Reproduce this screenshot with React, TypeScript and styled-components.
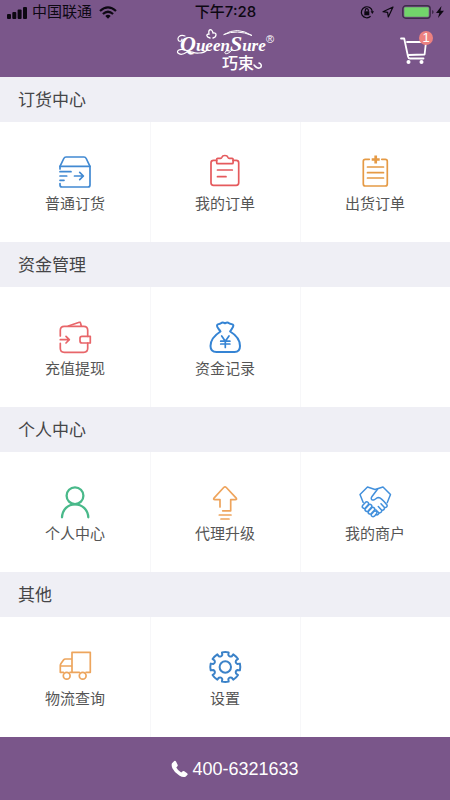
import React from "react";
import styled, { createGlobalStyle } from "styled-components";

const purple = "#7a568a";
const cjk = '"Liberation Sans", "Noto Sans CJK SC", sans-serif';

const GlobalStyle = createGlobalStyle`
  * { box-sizing: border-box; }
  body { margin: 0; background: #fff; font-family: ${cjk}; }
`;

const Page = styled.div`
  min-height: 100vh;
  display: flex;
  flex-direction: column;
`;

const Header = styled.header`
  background: ${purple};
`;

const StatusBar = styled.div`
  display: grid;
  grid-template-columns: 1fr auto 1fr;
  align-items: center;
  height: 24px;
  padding: 0 6px 0 7px;
  color: #0d0812;
  font-size: 15px;
  line-height: 24px;
`;

const StatusGroup = styled.div<{ $end?: boolean }>`
  display: flex;
  align-items: center;
  gap: ${(p) => (p.$end ? 8 : 5)}px;
  justify-content: ${(p) => (p.$end ? "flex-end" : "flex-start")};
`;

const Carrier = styled.span`
  margin-right: 2px;
`;

const Time = styled.time`
  font-family: Inter, "Noto Sans CJK SC", sans-serif;
  font-weight: 500;
`;

const Power = styled.div`
  display: flex;
  align-items: center;
  gap: 2px;
`;

const NavBar = styled.div`
  display: grid;
  grid-template-columns: 1fr auto 1fr;
  align-items: center;
  height: 53px;
  padding: 0 16px;
`;

const Logo = styled.svg`
  grid-column: 2;
  display: block;
  overflow: visible;
`;

const CartButton = styled.button`
  position: relative;
  justify-self: end;
  display: flex;
  padding: 0;
  border: 0;
  background: none;
  color: #fff;
  cursor: pointer;
`;

const Badge = styled.span`
  position: absolute;
  top: -6px;
  right: 1px;
  width: 14px;
  height: 14px;
  border-radius: 50%;
  background: #ec8180;
  color: #fff;
  font-size: 13px;
  line-height: 14px;
  text-align: center;
`;

const SectionTitle = styled.h2`
  margin: 0;
  padding: 2px 18px 0;
  background: #efeff5;
  color: #454547;
  font-size: 17px;
  font-weight: 400;
  line-height: 43px;
`;

const Grid = styled.div`
  display: grid;
  grid-template-columns: repeat(3, 1fr);
`;

const Tile = styled.a`
  display: flex;
  flex-direction: column;
  align-items: center;
  gap: 4px;
  height: 120px;
  padding-top: 31px;
  color: #555;
  font-size: 15px;
  line-height: 22px;
  text-decoration: none;

  &:not(:nth-child(3n + 1)) {
    box-shadow: inset 1px 0 #f7f7f9;
  }
`;

const EmptyTile = styled(Tile).attrs({ as: "div" })``;

const TileIcon = styled.svg<{ $color: string }>`
  width: 36px;
  height: 36px;
  overflow: visible;
  fill: none;
  stroke: ${(p) => p.$color};
  stroke-width: 1.7;
  stroke-linecap: round;
  stroke-linejoin: round;
`;

const Footer = styled.footer`
  flex: 1 0 63px;
  display: flex;
  align-items: center;
  justify-content: center;
  background: ${purple};
`;

const PhoneLink = styled.a`
  display: flex;
  align-items: center;
  gap: 4px;
  padding-left: 20px;
  color: #fff;
  font-size: 18px;
  line-height: 24px;
  text-decoration: none;
`;

function gearPath(cx: number, cy: number, outer: number, inner: number) {
  const point = (r: number, deg: number) => {
    const a = (deg * Math.PI) / 180;
    return `${(cx + r * Math.cos(a)).toFixed(2)} ${(cy + r * Math.sin(a)).toFixed(2)}`;
  };
  let d = "";
  for (let i = 0; i < 8; i++) {
    const a = i * 45;
    d += `${i ? "L" : "M"}${point(inner, a - 14)}L${point(outer, a - 13)}`;
    d += `A${outer} ${outer} 0 0 1 ${point(outer, a + 13)}`;
    d += `L${point(inner, a + 14)}Q${point(inner - 2, a + 22.5)} ${point(inner, a + 31)}`;
  }
  return d + "Z";
}

const icons = {
  box: (
    <>
      <path d="M3 16V13.300L6.800 5.500Q7.500 4 9 4H27Q28.500 4 29.200 5.500L33 13.300V32Q33 34 31 34H5Q3 34 3 32V30.500" />
      <path d="M3 13.300H33M3 18.700H14M3 23H9.700M3 27.300H7M17.500 23H26.300M22.700 19.300L26.400 23L22.700 26.700" />
    </>
  ),
  clipboard: (
    <>
      <path d="M9.700 7.300H6.500Q4 7.300 4 9.800v20q0 2.500 2.500 2.500h22.700q2.500 0 2.500-2.500v-20q0-2.500-2.500-2.500H26" />
      <path d="M10.700 5.300h2.800q1 0 1.400-1 .6-1.800 3-1.800t3 1.800q.4 1 1.400 1h2.800q1 0 1 1v3.400q0 1-1 1H10.700q-1 0-1-1V6.300q0-1 1-1zM10.500 17h14.800M10.500 23.700H19" />
    </>
  ),
  shipped: (
    <>
      <path d="M12.300 6.300H8.300q-2 0-2 2V31q0 2 2 2h20q2 0 2-2V8.300q0-2-2-2h-3.500M10.500 14h16M10.500 19.700h16M10.500 25h16" />
      <path d="M18.700 2.500v8M14.700 6.500h8" strokeWidth="2.700" strokeLinecap="butt" />
    </>
  ),
  wallet: (
    <>
      <path d="M3.300 18v-5.700q0-4 4-4h19.400q4 0 4 4v6M30.700 25v5.300q0 4-4 4H7.300q-4 0-4-4v-5" />
      <path d="M3.300 21.700h9M9 18.400l3.300 3.300L9 25M33.300 18.300H25q-2 0-2 2V23q0 2 2 2h8.300zM11.300 8l11-3.700q1-.3 1.200.7L24.300 8" />
    </>
  ),
  bag: (
    <>
      <path strokeWidth="2" d="M13.500 13.500C12 11 9.500 9.500 10 7.200 10.400 5.200 13 6.500 14 5.200q1.500-1.300 4 .1 2.500-1.400 4-.1c1 1.300 4 0 4.400 2 .3 2.300-2 3.800-3.300 6.300C29 17 33 22 33 28c0 4-2 6-5.500 6h-18c-4 0-6-2-6-6C3.500 22 8 17 13.500 13.500z" />
      <path d="M14.700 18l3.600 5.200L22 18M18.300 23.200v6.300M13.700 23.200h9.200M13.700 26h9.200" />
    </>
  ),
  person: (
    <>
      <circle cx="18" cy="12.700" r="8.400" strokeWidth="2.300" />
      <path d="M5 34.300C5.400 26.500 11 21.300 18 21.300s12.900 5.200 13.300 13" strokeWidth="2.300" />
    </>
  ),
  upgrade: (
    <path d="M13 24V16.600H8q-2.200 0-.8-1.800L16.700 4.500q1.300-1.300 2.600 0l9.700 10.300q1.400 1.800-.8 1.800h-4.500v11.200h-8M12.300 32h11.700M14 36h8" />
  ),
  handshake: (
    <>
      <path strokeWidth="1.500" d="M18 6.500L10.500 4 3 11.500l3.200 8M18 6.500L26 4l7.500 7.500-3.300 8.200" />
      <path strokeWidth="1.500" d="M20.500 6.300L15 13.500c-1.500 2-.5 4 1.500 3.500 2-.4 3-2.500 5-2.500 2.500.3 6.300 4.700 8.300 7.200 1 1.800-.8 3.600-2.600 2.500.8 2-.9 3.600-2.700 2.800.7 1.900-1 3.400-2.700 2.700.2 1.800-1.500 2.700-3 1.800M27.200 24.200l-3.200-3.400M24.500 27l-3.200-3.400M21.800 29.700l-3-3" />
      <path strokeWidth="1.500" d="M5.800 22.300l2.600-2.900c1.700-1.500 4 .4 2.800 2.300L8.300 25c-1.800 1.300-4-.8-2.500-2.700zM8.500 25.500l3.200-3.600c1.700-1.400 4 .4 2.700 2.300l-3.300 3.800c-1.800 1.300-4-.7-2.600-2.500zM11.600 28.200l3-3.300c1.700-1.400 4 .4 2.700 2.300l-3 3.400c-1.800 1.300-4-.6-2.700-2.400zM14.600 30.900l2.300-2.500c1.600-1.300 3.900.4 2.700 2.300l-2.200 2.500c-1.800 1.300-4-.5-2.800-2.300z" />
    </>
  ),
  truck: (
    <>
      <path d="M15 24.300v-20h18.300v20H29M6.400 24.300H3.300V17.500q0-1 .7-2l2.500-3.500q.7-1 2-1H15M3.300 18H15M13 24.300h9.300" />
      <circle cx="9.700" cy="27.700" r="3.400" />
      <circle cx="25.700" cy="27.700" r="3.400" />
    </>
  ),
  gear: (
    <>
      <path d={gearPath(18.300, 19, 15, 12.500)} strokeWidth="2" />
      <circle cx="18.300" cy="19" r="5.700" strokeWidth="2" />
    </>
  ),
};

type Item = { label: string; icon: keyof typeof icons; color: string };

const sections: { title: string; items: Item[] }[] = [
  {
    title: "订货中心",
    items: [
      { label: "普通订货", icon: "box", color: "#4189d2" },
      { label: "我的订单", icon: "clipboard", color: "#e55a5d" },
      { label: "出货订单", icon: "shipped", color: "#e59a45" },
    ],
  },
  {
    title: "资金管理",
    items: [
      { label: "充值提现", icon: "wallet", color: "#e8666a" },
      { label: "资金记录", icon: "bag", color: "#3584d4" },
    ],
  },
  {
    title: "个人中心",
    items: [
      { label: "个人中心", icon: "person", color: "#49b98a" },
      { label: "代理升级", icon: "upgrade", color: "#eea45c" },
      { label: "我的商户", icon: "handshake", color: "#4290dc" },
    ],
  },
  {
    title: "其他",
    items: [
      { label: "物流查询", icon: "truck", color: "#eda55d" },
      { label: "设置", icon: "gear", color: "#3b82c8" },
    ],
  },
];

function SignalIcon() {
  return (
    <svg width="20" height="13" viewBox="0 0 20 13" fill="currentColor" aria-hidden="true">
      <rect x="0" y="8" width="4" height="5" rx="1" />
      <rect x="5.300" y="6" width="4" height="7" rx="1" />
      <rect x="10.600" y="3.500" width="4" height="9.500" rx="1" />
      <rect x="16" y="1" width="4" height="12" rx="1" />
    </svg>
  );
}

function WifiIcon() {
  return (
    <svg width="18" height="13" viewBox="0 0 18 13" fill="none" stroke="currentColor" strokeWidth="2.200" aria-hidden="true">
      <path d="M1 5Q9-2.200 17 5M3.900 8Q9 3.500 14.100 8" />
      <path d="M6.300 9.900Q9 7.700 11.700 9.900L9 12.700z" fill="currentColor" stroke="none" />
    </svg>
  );
}

function RotationLockIcon() {
  return (
    <svg width="14" height="14" viewBox="0 0 14 14" fill="none" stroke="currentColor" strokeWidth="1.200" aria-hidden="true">
      <path d="M10.600 11.300A5.500 5.500 0 1 1 12.300 6.500" />
      <path d="M10.600 6.300h3.400l-1.700 2.600z" fill="currentColor" stroke="none" />
      <path d="M4.300 6.300h5v4h-5z" fill="currentColor" stroke="none" />
      <path d="M5.300 6.500V5.200a1.500 1.500 0 0 1 3 0v1.300" />
    </svg>
  );
}

function LocationIcon() {
  return (
    <svg width="12" height="12" viewBox="0 0 12 12" fill="none" stroke="currentColor" strokeWidth="1.200" strokeLinejoin="round" aria-hidden="true">
      <path d="M11 1L1 5.700l4.600.7.7 4.600z" />
    </svg>
  );
}

function BatteryIcon() {
  return (
    <svg width="32" height="14" viewBox="0 0 32 14" aria-hidden="true">
      <rect x="0.800" y="0.800" width="27.400" height="12.400" rx="3" fill="none" stroke="#3f2b4b" strokeWidth="1.400" />
      <rect x="2.300" y="2.300" width="24.400" height="9.400" rx="1" fill="#72d46b" />
      <path d="M30 5v4q1.700-.6 1.700-2T30 5z" fill="#3f2b4b" />
    </svg>
  );
}

function BoltIcon() {
  return (
    <svg width="8" height="12" viewBox="0 0 8 12" fill="currentColor" aria-hidden="true">
      <path d="M5.500 0L0 7h3.300L2 12l6-7.200H4.500z" />
    </svg>
  );
}

function BrandLogo() {
  return (
    <Logo width="98" height="45" viewBox="0 0 98 45" role="img" aria-label="Queen Sure 巧束">
      <text x="4" y="23" fill="#fff" fontSize="17" fontFamily='"Liberation Serif", serif' fontStyle="italic" fontWeight="700">
        <tspan fontSize="22">Q</tspan>ueen<tspan fontSize="22">S</tspan>ure
      </text>
      <g fill="none" stroke="#fff" strokeLinecap="round">
        <path d="M9 8C4 6 0 10 3 13q3 1 3-2M9 22C4 20 0 23 2 25s6 1 9-1c4-2 6 2 12 1 4 0 6-1 8-3" strokeWidth="1.200" />
        <path d="M48 6.500Q61-2 76 7.500Q61 1 48 6.500M56 22c-3 4-8 5-7 2q1-2 5-1" strokeWidth="1" />
        <path d="M34 10c-4-1-4-4-1-4-1-5 3-6 4-1 4-1 4 4 0 5" strokeWidth="1.300" />
        <path d="M78 37q4 5 7 2 1-3-2-4" strokeWidth="1.500" />
      </g>
      <text x="90" y="15" fill="#fff" fontSize="11" fontFamily='"Liberation Sans", sans-serif'>®</text>
      <text x="46" y="41" fill="#fff" fontSize="16" fontWeight="500" fontFamily='"Noto Sans CJK SC", sans-serif'>巧束</text>
    </Logo>
  );
}

function CartIcon() {
  return (
    <svg width="34" height="28" viewBox="0 0 34 28" fill="none" stroke="currentColor" strokeWidth="1.800" strokeLinecap="round" strokeLinejoin="round" aria-hidden="true">
      <path d="M1 1.500h3.200L8 19.500Q8.400 21.500 10 21.500H23.500M7 5H26L24.600 17.500 9 18" />
      <circle cx="8.500" cy="25" r="2" fill="currentColor" stroke="none" />
      <circle cx="21.500" cy="25" r="2" fill="currentColor" stroke="none" />
    </svg>
  );
}

export default function App() {
  return (
    <Page>
      <GlobalStyle />
      <Header>
        <StatusBar>
          <StatusGroup>
            <SignalIcon />
            <Carrier>中国联通</Carrier>
            <WifiIcon />
          </StatusGroup>
          <Time>下午7:28</Time>
          <StatusGroup $end>
            <RotationLockIcon />
            <LocationIcon />
            <Power>
              <BatteryIcon />
              <BoltIcon />
            </Power>
          </StatusGroup>
        </StatusBar>
        <NavBar>
          <BrandLogo />
          <CartButton type="button" aria-label="购物车">
            <CartIcon />
            <Badge>1</Badge>
          </CartButton>
        </NavBar>
      </Header>
      <main>
        {sections.map((section) => (
          <section key={section.title}>
            <SectionTitle>{section.title}</SectionTitle>
            <Grid>
              {section.items.map((item) => (
                <Tile key={item.label} href="#">
                  <TileIcon viewBox="0 0 36 36" $color={item.color} aria-hidden="true">
                    {icons[item.icon]}
                  </TileIcon>
                  {item.label}
                </Tile>
              ))}
              {section.items.length < 3 && <EmptyTile />}
            </Grid>
          </section>
        ))}
      </main>
      <Footer>
        <PhoneLink href="tel:400-6321633">
          <svg width="17" height="18" viewBox="0 0 17 18" fill="currentColor" aria-hidden="true">
            <path d="M1 3.300L3.300 1q1-.6 1.700.5L6.600 4.700q.5 1-.4 1.700L5.300 7.500q1.500 3 4.900 5l1.500-1.200q.8-.6 1.600 0l2.800 2q1 .8.2 1.700l-1.800 1.700Q12 17.800 8.300 15.500 3.500 12.800 1.400 8.300.1 5.300 1 3.300z" />
          </svg>
          400-6321633
        </PhoneLink>
      </Footer>
    </Page>
  );
}
